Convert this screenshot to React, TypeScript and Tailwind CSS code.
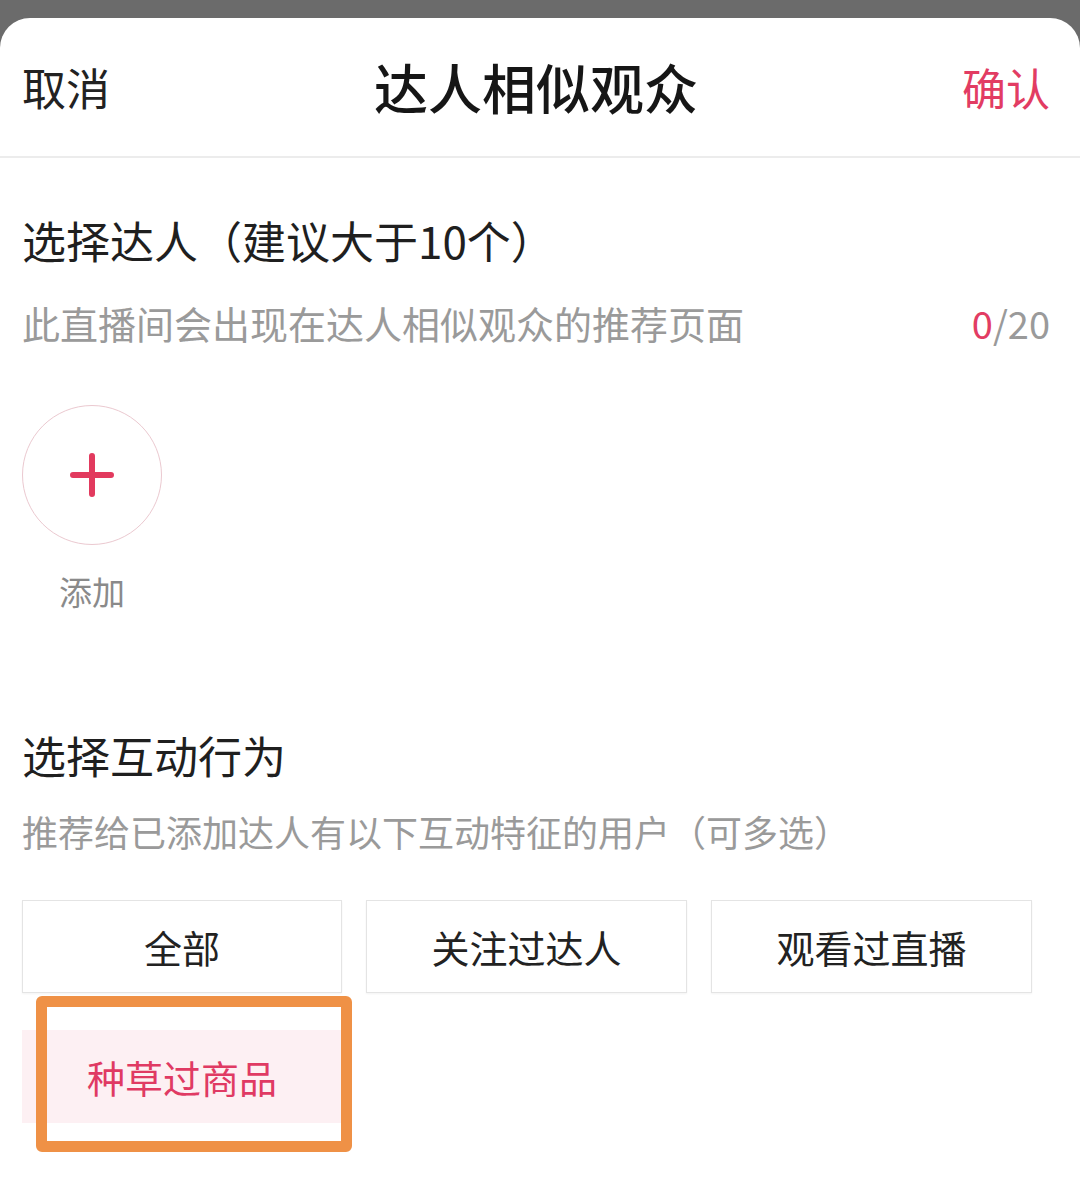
const FONT = { fontFamily: '"Noto Sans CJK SC", "Noto Sans", sans-serif' };

const behaviors = ["全部", "关注过达人", "观看过直播"];

const App = () => {
  return (
    <div className="min-h-screen bg-[#6b6b6b] pt-[18px]" style={FONT}>
      <div className="min-h-[1181px] rounded-t-[30px] bg-white">
        {/* Header */}
        <div className="flex h-[140px] items-center justify-between border-b-2 border-[#ececec] pl-[22px] pr-[30px]">
          <span className="w-[88px] text-[44px] leading-none text-[#222]">取消</span>
          <span className="text-[54px] font-medium leading-none text-[#161616]">达人相似观众</span>
          <span className="w-[88px] text-right text-[44px] leading-none text-[#e23c63]">确认</span>
        </div>

        {/* 选择达人 */}
        <div className="pl-[22px] pr-[30px] pt-[52px]">
          <h2 className="text-[44px] leading-[60px] text-[#1f1f1f]">选择达人（建议大于10个）</h2>
          <div className="mt-[28px] flex items-center justify-between text-[38px] leading-[50px] text-[#9a9a9a]">
            <span>此直播间会出现在达人相似观众的推荐页面</span>
            <span>
              <span className="text-[#e23c63]">0</span>/20
            </span>
          </div>

          <div className="mt-[57px] flex w-[140px] flex-col items-center">
            <button className="flex h-[140px] w-[140px] items-center justify-center rounded-full border border-[#ebc9d0] bg-white">
              <svg width="44" height="44" viewBox="0 0 44 44">
                <path d="M22 3v38M3 22h38" stroke="#e23a5e" strokeWidth="6" strokeLinecap="round" />
              </svg>
            </button>
            <span className="mt-[26px] text-[33px] leading-[40px] text-[#8a8a8a]">添加</span>
          </div>
        </div>

        {/* 选择互动行为 */}
        <div className="pl-[22px] pr-[30px] pt-[114px]">
          <h2 className="text-[44px] leading-[60px] text-[#1f1f1f]">选择互动行为</h2>
          <p className="mt-[21px] text-[36px] leading-[50px] text-[#9a9a9a]">
            推荐给已添加达人有以下互动特征的用户（可多选）
          </p>

          <div className="relative mt-[44px] grid grid-cols-[320px_321px_321px] gap-x-[24px] gap-y-[37px]">
            {behaviors.map((b) => (
              <div
                key={b}
                className="flex h-[93px] items-center justify-center border border-[#e4e4e4] bg-white text-[38px] text-[#222] shadow-[0_1px_2px_rgba(0,0,0,0.05)]"
              >
                {b}
              </div>
            ))}
            <div className="flex h-[93px] items-center justify-center bg-[#fdf0f3] text-[38px] text-[#e03a63]">
              种草过商品
            </div>

            {/* annotation box */}
            <div className="pointer-events-none absolute left-[14px] top-[96px] h-[156px] w-[316px] rounded-[6px] border-[11px] border-[#ef9146]" />
          </div>
        </div>
      </div>
    </div>
  );
};

export default App;
